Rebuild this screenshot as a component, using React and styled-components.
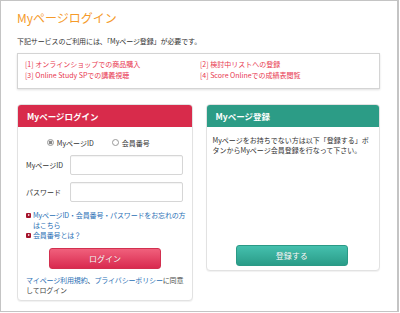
import React from "react";
import styled, { createGlobalStyle } from "styled-components";

const Global = createGlobalStyle`
  html, body { margin: 0; padding: 0; background: #fff; }
  body { font-family: "Noto Sans CJK JP", "Noto Sans", sans-serif; color: #333; }
`;

const Frame = styled.div`
  width: 399px;
  height: 312px;
  box-sizing: border-box;
  border: 1px solid #c4c4c4;
  border-right-width: 2px;
  padding: 9px 17px 0 16px;
  overflow: hidden;
`;

const Title = styled.h1`
  margin: 0;
  font-size: 12px;
  line-height: 16px;
  font-weight: normal;
  color: #f59a2a;
`;

const Lead = styled.p`
  margin: 10px 0 0;
  font-size: 7px;
  line-height: 10px;
  letter-spacing: -0.1px;
`;

const ServiceBox = styled.div`
  margin-top: 7px;
  height: 36px;
  box-sizing: border-box;
  border: 1px solid #d4d4d4;
  box-shadow: 0 1px 2px rgba(0, 0, 0, 0.12);
  padding: 5px 7px;
  display: grid;
  grid-template-columns: 175px 1fr;
  grid-auto-rows: 11px;
`;

const ServiceLink = styled.a`
  font-size: 7px;
  line-height: 11px;
  color: #e8384f;
  text-decoration: none;
  white-space: nowrap;
`;

const Columns = styled.div`
  margin-top: 15px;
  display: flex;
  align-items: flex-start;
  gap: 13px;
`;

const Panel = styled.section`
  width: ${(p) => p.$w}px;
  box-sizing: border-box;
  border: 1px solid #e2e2e2;
  border-radius: 4px;
  box-shadow: 0 1px 1px rgba(0, 0, 0, 0.06);
  overflow: hidden;
  background: #fff;
`;

const PanelHead = styled.h2`
  margin: 0;
  height: 22px;
  padding-left: 9px;
  font-size: 8.5px;
  line-height: 22px;
  font-weight: bold;
  color: #fff;
  background: ${(p) => p.$bg};
`;

const LoginBody = styled.div`
  padding: 10px 9px 5px 8px;
`;

const RadioRow = styled.div`
  display: flex;
  justify-content: center;
  gap: 18px;
  padding-right: 12px;
  height: 11px;
  align-items: center;
`;

const RadioLabel = styled.label`
  display: flex;
  align-items: center;
  gap: 3px;
  font-size: 7px;
`;

const RadioMark = styled.span`
  width: 5px;
  height: 5px;
  border-radius: 50%;
  border: 1px solid #999;
  background: ${(p) => (p.$on ? "radial-gradient(circle, #888 0 1.5px, #eee 2px)" : "#fff")};
`;

const Field = styled.div`
  margin-top: 7px;
  display: flex;
  align-items: center;
`;

const FieldLabel = styled.span`
  width: 44px;
  font-size: 7px;
`;

const Input = styled.div`
  width: 114px;
  height: 20px;
  box-sizing: border-box;
  border: 1px solid #d6d6d6;
  border-radius: 2px;
  background: #fff;
  box-shadow: inset 0 1px 1px rgba(0, 0, 0, 0.05);
`;

const HelpList = styled.ul`
  list-style: none;
  margin: 8px 0 0;
  padding: 0;
`;

const HelpItem = styled.li`
  position: relative;
  padding-left: 7px;
  font-size: 7px;
  line-height: 10px;
  letter-spacing: -0.15px;
  white-space: nowrap;
  color: #2a6fb5;
`;

const Bullet = styled.span`
  position: absolute;
  left: 0;
  top: 2.5px;
  width: 5px;
  height: 5px;
  border-radius: 1px;
  background: #a5142c;
  &::after {
    content: "";
    position: absolute;
    left: 2px;
    top: 1px;
    border-left: 2px solid #fff;
    border-top: 1.5px solid transparent;
    border-bottom: 1.5px solid transparent;
  }
`;

const Button = styled.button`
  display: block;
  width: 112px;
  height: 21px;
  margin: ${(p) => p.$m};
  padding: 0;
  border: 1px solid ${(p) => p.$edge};
  border-radius: 3px;
  background: linear-gradient(${(p) => p.$top}, ${(p) => p.$bottom});
  color: #fff;
  font-family: inherit;
  font-size: 8px;
  line-height: 19px;
  text-shadow: 0 0 1px rgba(0, 0, 0, 0.2);
`;

const Terms = styled.p`
  margin: 6px 0 0;
  font-size: 7px;
  line-height: 10px;
  letter-spacing: -0.15px;
  white-space: nowrap;
  color: #444;
`;

const TermsLink = styled.a`
  color: #2a6fb5;
  text-decoration: none;
`;

const RegisterBody = styled.div`
  height: 143px;
  box-sizing: border-box;
  padding: 8px 8px 4px 6px;
  display: flex;
  flex-direction: column;
`;

const RegisterText = styled.p`
  margin: 0;
  font-size: 7px;
  line-height: 10px;
`;

export default function App() {
  return (
    <>
      <Global />
      <Frame>
        <Title>Myページログイン</Title>
        <Lead>下記サービスのご利用には、「Myページ登録」が必要です。</Lead>
        <ServiceBox>
          <ServiceLink href="#">[1] オンラインショップでの商品購入</ServiceLink>
          <ServiceLink href="#">[2] 検討中リストへの登録</ServiceLink>
          <ServiceLink href="#">[3] Online Study SPでの講義視聴</ServiceLink>
          <ServiceLink href="#">[4] Score Onlineでの成績表閲覧</ServiceLink>
        </ServiceBox>
        <Columns>
          <Panel $w={176}>
            <PanelHead $bg="#d82b4b">Myページログイン</PanelHead>
            <LoginBody>
              <RadioRow>
                <RadioLabel><RadioMark $on />MyページID</RadioLabel>
                <RadioLabel><RadioMark />会員番号</RadioLabel>
              </RadioRow>
              <Field>
                <FieldLabel>MyページID</FieldLabel>
                <Input />
              </Field>
              <Field>
                <FieldLabel>パスワード</FieldLabel>
                <Input />
              </Field>
              <HelpList>
                <HelpItem><Bullet />MyページID・会員番号・パスワードをお忘れの方<br />はこちら</HelpItem>
                <HelpItem><Bullet />会員番号とは？</HelpItem>
              </HelpList>
              <Button $m="8px 0 0 23px" $edge="#d2304f" $top="#f0607c" $bottom="#d92a4f">ログイン</Button>
              <Terms>
                <TermsLink href="#">マイページ利用規約</TermsLink>、<TermsLink href="#">プライバシーポリシー</TermsLink>に同意<br />してログイン
              </Terms>
            </LoginBody>
          </Panel>
          <Panel $w={175}>
            <PanelHead $bg="#2c9c86">Myページ登録</PanelHead>
            <RegisterBody>
              <RegisterText>
                Myページをお持ちでない方は以下「登録する」ボタンからMyページ会員登録を行なって下さい。
              </RegisterText>
              <Button $m="auto auto 0" $edge="#2b9a86" $top="#45c0ae" $bottom="#2a9c88">登録する</Button>
            </RegisterBody>
          </Panel>
        </Columns>
      </Frame>
    </>
  );
}
